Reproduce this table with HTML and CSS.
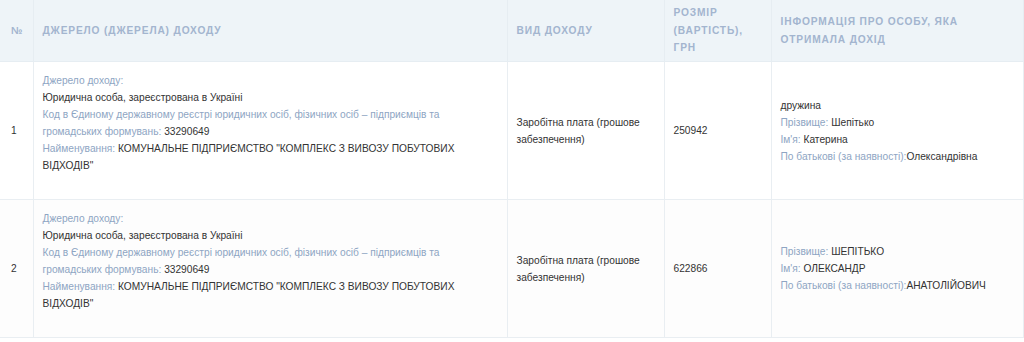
FILE: index.html
```html
<!DOCTYPE html>
<html lang="uk">
<head>
<meta charset="utf-8">
<link rel="stylesheet" href="styles.css">
</head>
<body>
<table class="income">
  <colgroup>
    <col class="c-num"><col class="c-src"><col class="c-type"><col class="c-sum"><col class="c-person">
  </colgroup>
  <thead>
    <tr>
      <th>№</th>
      <th>Джерело (джерела) доходу</th>
      <th>Вид доходу</th>
      <th>Розмір (вартість), грн</th>
      <th>Інформація про особу, яка отримала дохід</th>
    </tr>
  </thead>
  <tbody>
    <tr>
      <td>1</td>
      <td class="src">
        <div class="src-box">
          <div class="lbl">Джерело доходу:</div>
          <div>Юридична особа, зареєстрована в Україні</div>
          <div><span class="lbl">Код в Єдиному державному реєстрі юридичних осіб, фізичних осіб – підприємців та громадських формувань:</span> 33290649</div>
          <div><span class="lbl">Найменування:</span> КОМУНАЛЬНЕ ПІДПРИЄМСТВО "КОМПЛЕКС З ВИВОЗУ ПОБУТОВИХ ВІДХОДІВ"</div>
        </div>
      </td>
      <td>Заробітна плата (грошове забезпечення)</td>
      <td>250942</td>
      <td>
        <div>дружина</div>
        <div><span class="lbl">Прізвище:</span> Шепітько</div>
        <div><span class="lbl">Ім'я:</span> Катерина</div>
        <div><span class="lbl">По батькові (за наявності):</span>Олександрівна</div>
      </td>
    </tr>
    <tr class="alt">
      <td>2</td>
      <td class="src">
        <div class="src-box">
          <div class="lbl">Джерело доходу:</div>
          <div>Юридична особа, зареєстрована в Україні</div>
          <div><span class="lbl">Код в Єдиному державному реєстрі юридичних осіб, фізичних осіб – підприємців та громадських формувань:</span> 33290649</div>
          <div><span class="lbl">Найменування:</span> КОМУНАЛЬНЕ ПІДПРИЄМСТВО "КОМПЛЕКС З ВИВОЗУ ПОБУТОВИХ ВІДХОДІВ"</div>
        </div>
      </td>
      <td>Заробітна плата (грошове забезпечення)</td>
      <td>622866</td>
      <td>
        <div><span class="lbl">Прізвище:</span> ШЕПІТЬКО</div>
        <div><span class="lbl">Ім'я:</span> ОЛЕКСАНДР</div>
        <div><span class="lbl">По батькові (за наявності):</span>АНАТОЛІЙОВИЧ</div>
      </td>
    </tr>
  </tbody>
</table>
</body>
</html>
```

FILE: styles.css
```css
html, body {
  margin: 0;
  padding: 0;
  background: #ffffff;
}
body {
  font-family: "Liberation Sans", Arial, sans-serif;
  font-size: 10.2px;
  color: #333;
}
.income {
  border-collapse: collapse;
  width: 1023px;
  table-layout: fixed;
}
.c-num { width: 33px; }
.c-src { width: 474px; }
.c-type { width: 157px; }
.c-sum { width: 107px; }
.c-person { width: 252px; }
.income th {
  background: #eef4f8;
  color: #a3b5cf;
  font-weight: bold;
  text-transform: uppercase;
  letter-spacing: 0.85px;
  font-size: 10.2px;
  line-height: 17.5px;
  text-align: left;
  vertical-align: middle;
  height: 61px;
  padding: 0 9px;
  border: 1px solid #e6edf2;
  border-top: none;
}
.income td {
  vertical-align: middle;
  padding: 8px 9px;
  line-height: 17px;
  border: 1px solid #e9eef2;
  height: 121px;
}
.income th:first-child, .income td:first-child { border-left: none; padding-left: 11px; }
.income tr.alt td { background: #fdfdfd; }
.src-box { margin-bottom: 16px; }
.lbl { color: #8ea5c3; }
```
